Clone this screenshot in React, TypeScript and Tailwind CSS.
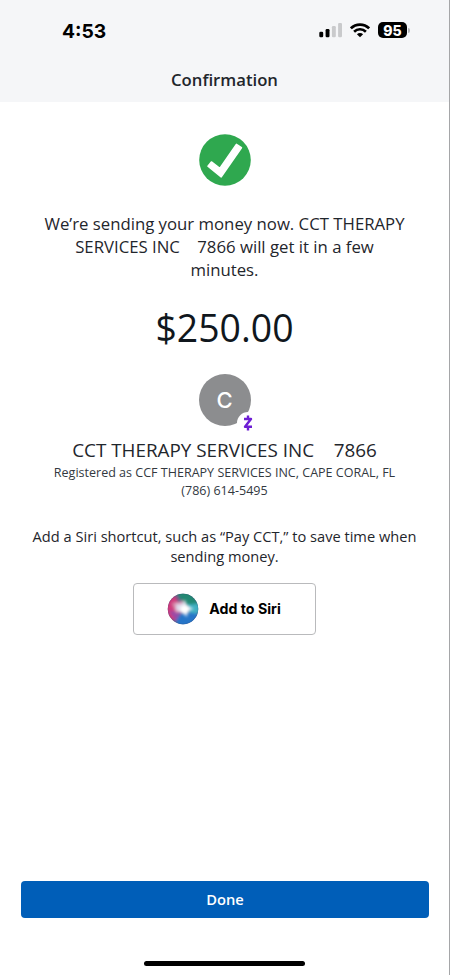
const SignalIcon = () => (
  <svg width="24" height="16" viewBox="0 0 24 16" className="block">
    <rect x="0.3" y="9.8" width="3.9" height="5.4" rx="1.2" fill="#000" />
    <rect x="6.6" y="7" width="3.9" height="8.2" rx="1.2" fill="#000" />
    <rect x="12.9" y="4" width="3.9" height="11.2" rx="1.2" fill="#c9cacc" />
    <rect x="19.1" y="0.9" width="3.9" height="14.3" rx="1.2" fill="#c9cacc" />
  </svg>
);

const WifiIcon = () => (
  <svg width="20" height="15" viewBox="0 0 20 15" className="block">
    <g fill="none" stroke="#000" strokeWidth="2.6">
      <path d="M0.9 5.3a13 13 0 0 1 18.2 0" />
      <path d="M4.1 8.7a8.4 8.4 0 0 1 11.8 0" />
    </g>
    <path d="M10 14.3l-3.1-3.1a4.4 4.4 0 0 1 6.2 0z" fill="#000" />
  </svg>
);

const CheckIcon = () => (
  <svg width="52" height="52" viewBox="0 0 52 52" className="block">
    <circle cx="26" cy="26" r="25.8" fill="#2fa84f" />
    <path
      d="M9 32.2L12.4 28L20.8 34.4L37.4 10.4L42.4 13.7L22.2 42.8Z"
      fill="#fff"
      stroke="#fff"
      strokeWidth="1.6"
      strokeLinejoin="round"
    />
  </svg>
);

const ZelleIcon = () => (
  <svg width="10" height="16" viewBox="0 0 10 16" className="block">
    <g fill="none" stroke="#6d1ed4" strokeWidth="2.4">
      <path d="M1 4h7L2 11.8H9" strokeLinejoin="round" />
      <path d="M5 0.6v3M5 12v3.4" />
    </g>
  </svg>
);

const SiriIcon = () => (
  <svg width="32" height="32" viewBox="0 0 32 32" className="block">
    <defs>
      <clipPath id="orb">
        <circle cx="16" cy="16" r="15.2" />
      </clipPath>
      <filter id="soft" x="-50%" y="-50%" width="200%" height="200%">
        <feGaussianBlur stdDeviation="1.8" />
      </filter>
      <filter id="glow" x="-50%" y="-50%" width="200%" height="200%">
        <feGaussianBlur stdDeviation="1.5" />
      </filter>
    </defs>
    <g clipPath="url(#orb)">
      <rect width="32" height="32" fill="#53608c" />
      <g filter="url(#soft)">
        <path d="M-2 3h11l5 12-6 13-11-3z" fill="#cf3a7e" />
        <path d="M8-2h16l8 13-14 2z" fill="#208873" />
        <path d="M20 12l14-2v10l-11 2z" fill="#3fb0c2" />
        <path d="M8 24l10-5 14 2-6 14H10z" fill="#2674c8" />
        <path d="M2 18l12 1-5 9z" fill="#9a4aa6" />
        <path d="M5 10l11-2 2 9-9 3z" fill="#d78fae" />
      </g>
      <g filter="url(#glow)">
        <path
          d="M9 11l5 0 4-4 2 5 7 4-6 2-1 6-5-4-6-3z"
          fill="#dfe8f6"
          opacity="0.85"
        />
        <ellipse cx="18" cy="16.2" rx="4.6" ry="4.2" fill="#fff" />
      </g>
    </g>
    <circle
      cx="16"
      cy="16"
      r="14.9"
      fill="none"
      stroke="#2c3658"
      strokeOpacity="0.18"
      strokeWidth="0.7"
    />
  </svg>
);

const StatusBar = () => {
  return (
    <div className="flex h-[60px] items-start justify-between pl-[62px] pr-[39px]">
      <span className="mt-[17px] font-['Inter'] text-[19.3px] leading-7 font-bold text-black">
        4:53
      </span>
      <div className="mt-[22px] flex items-center">
        <SignalIcon />
        <div className="ml-[7px]">
          <WifiIcon />
        </div>
        <div className="ml-[8px] flex h-4 w-[29px] items-center justify-center rounded-[5px] bg-black pt-px font-['Inter'] text-[14px] leading-4 font-extrabold text-white">
          95
        </div>
        <div className="ml-px h-[5px] w-[2px] rounded-r-full bg-[#b7b8ba]" />
      </div>
    </div>
  );
};

const App = () => {
  return (
    <div className="flex h-[975px] w-[450px] flex-col border-r border-[#a5a6a8] bg-white font-['Open_Sans','Noto_Sans',sans-serif] text-[#1f262c]">
      <header className="h-[102px] shrink-0 bg-[#f5f6f8]">
        <StatusBar />
        <h1 className="mt-[7.5px] text-center text-[16.7px] leading-6 font-semibold">
          Confirmation
        </h1>
      </header>

      <main className="flex flex-col items-center text-center">
        <div className="mt-8">
          <CheckIcon />
        </div>

        <p className="mt-[27px] text-[16.75px] leading-[22.8px] whitespace-nowrap">
          We’re sending your money now. CCT THERAPY
          <br />
          SERVICES INC&nbsp;&nbsp;&nbsp; 7866 will get it in a few
          <br />
          minutes.
        </p>

        <p className="mt-[22px] text-[37.4px] leading-[50px] text-[#10171d]">
          $250.00
        </p>

        <div className="relative mt-[20.6px] flex size-[52px] items-center justify-center rounded-full bg-[#8c8d8f] pt-[2px] font-['Inter'] text-[22px] font-medium text-white">
          C
          <div className="absolute top-[38px] left-[38px] flex size-[22px] items-center justify-center rounded-full bg-white">
            <ZelleIcon />
          </div>
        </div>

        <h2 className="mt-[11.4px] text-[18.85px] leading-[26px] whitespace-nowrap">
          CCT THERAPY SERVICES INC&nbsp;&nbsp;&nbsp; 7866
        </h2>
        <p className="mt-[0.6px] text-[12.54px] leading-[18.5px] whitespace-nowrap text-[#33393f]">
          Registered as CCF THERAPY SERVICES INC, CAPE CORAL, FL
          <br />
          (786) 614-5495
        </p>

        <p className="mt-[25.4px] text-[14.64px] leading-5 whitespace-nowrap">
          Add a Siri shortcut, such as “Pay CCT,” to save time when
          <br />
          sending money.
        </p>

        <button className="mt-[16.6px] flex h-[52px] w-[183px] items-center justify-center gap-[10px] rounded-[4px] border border-[#b9babc] bg-white pr-px font-['Inter'] text-[14.2px] font-bold text-black">
          <SiriIcon />
          Add to Siri
        </button>
      </main>

      <footer className="mt-auto flex flex-col items-center pr-[20px] pb-[9px] pl-[21px]">
        <button className="h-[37.5px] w-full rounded-[4px] bg-[#005eb8] text-[14.7px] font-semibold text-white">
          Done
        </button>
        <div className="mt-[43px] mr-px h-[5px] w-[161px] rounded-full bg-black" />
      </footer>
    </div>
  );
};

export default App;
